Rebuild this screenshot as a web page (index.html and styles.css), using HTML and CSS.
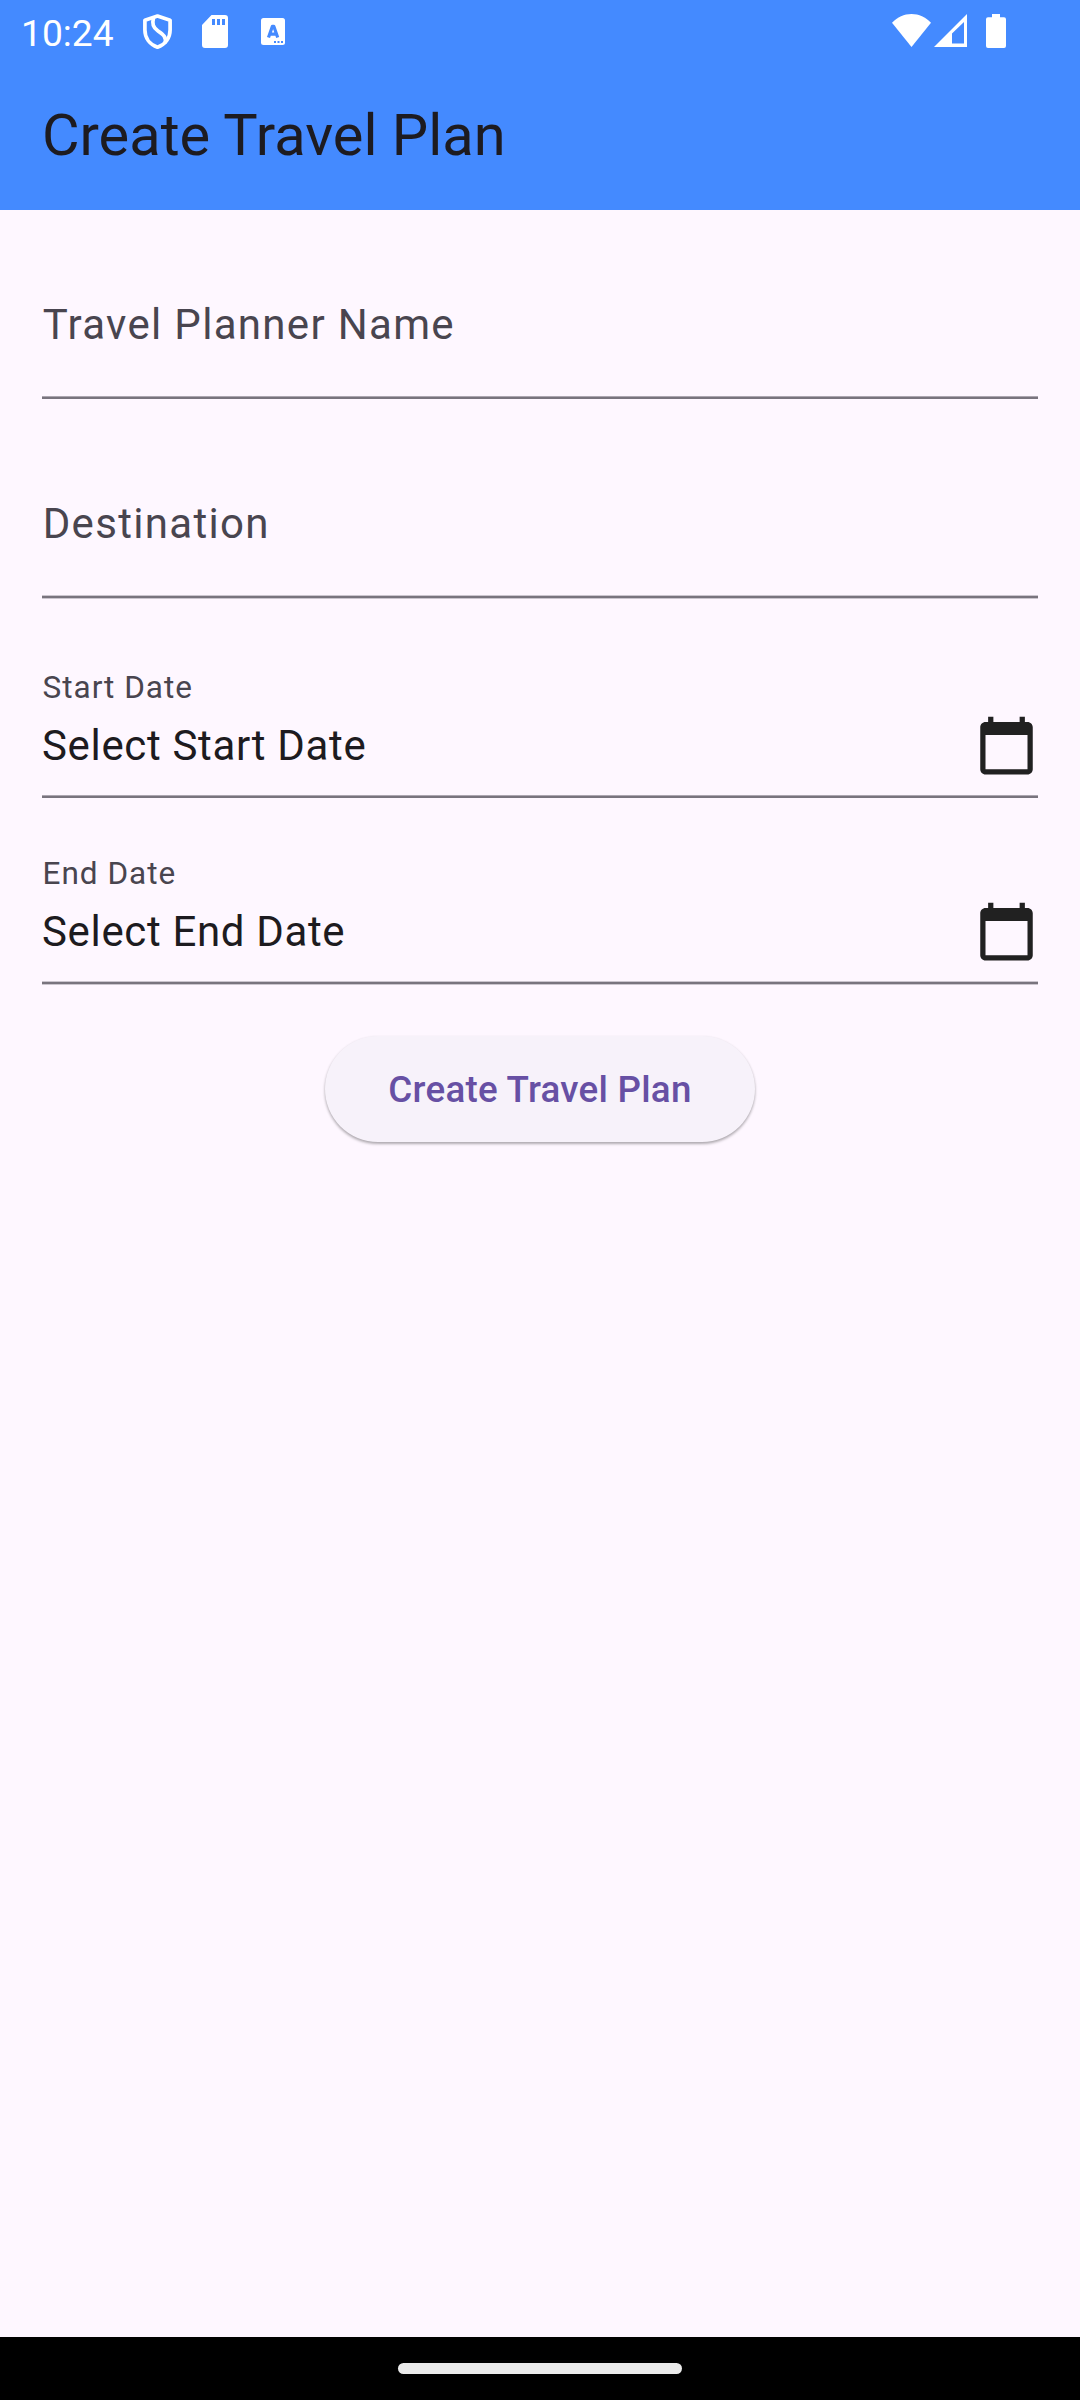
FILE: index.html
```html
<!DOCTYPE html>
<html lang="en">
<head>
<meta charset="utf-8">
<title>Create Travel Plan</title>
<link rel="stylesheet" href="styles.css">
</head>
<body>
<div class="screen">
  <header class="header">
    <div class="status">
      <span class="time">10:24</span>
      <svg class="shield" width="30" height="36" viewBox="0 0 30 36" fill="none" stroke="#fff" stroke-width="3.700" stroke-linejoin="round"><path d="M14.500 2 1.900 6.200V16c0 8.200 5 14.600 12.600 17.200C22.100 30.600 27.100 24.200 27.100 16V6.200Z"/><path d="M10.500 3.500C9 10 10 13.500 15 17c5.500 3.700 8.500 6 7 12"/></svg>
      <svg class="sd" width="26" height="33" viewBox="0 0 26 33"><path fill="#fff" fill-rule="evenodd" d="M9.500 0H23q3 0 3 3v27q0 3-3 3H3q-3 0-3-3V10ZM10 4v6h3V4Zm5 0v6h3V4Zm5 0v6h3V4Z"/></svg>
      <svg class="lang" width="24" height="27" viewBox="0 0 24 27"><rect width="24" height="27" rx="2.500" fill="#fff"/><path d="M7.500 19.500 11.400 8.300h1.400L16.700 19.500M9 16.200h6" fill="none" stroke="#448aff" stroke-width="3.200" stroke-linejoin="round"/><path d="M13 23h2v2h-2zm3.500 0h2v2h-2zm3.500 0h2v2h-2z" fill="#448aff"/></svg>
      <svg class="wifi" width="39" height="33" viewBox="0 0 39 33"><path fill="#fff" d="M0 8.800C5.500 3 12 0 19.500 0S33.500 3 39 8.800L19.500 33Z"/></svg>
      <svg class="signal" width="33" height="33" viewBox="0 0 33 33"><path fill="#fff" fill-rule="evenodd" d="M33 0v33H0ZM30 8 18 19.500V29.500h12Z"/></svg>
      <svg class="battery" width="20" height="34" viewBox="0 0 20 34"><path fill="#fff" d="M6 0h8v3.300h4q2 0 2 2V32q0 2-2 2H2q-2 0-2-2V5.300q0-2 2-2h4Z"/></svg>
    </div>
    <h1 class="title">Create Travel Plan</h1>
  </header>
  <main class="form">
    <div class="field name"><div class="label">Travel Planner Name</div><div class="rule"></div></div>
    <div class="field destination"><div class="label">Destination</div><div class="rule soft"></div></div>
    <div class="field date start">
      <div class="caption">Start Date</div>
      <div class="row"><span class="value">Select Start Date</span><svg class="calendar" viewBox="0 0 24 24"><path d="M20 3h-1V1h-2v2H7V1H5v2H4c-1.100 0-2 .9-2 2v16c0 1.100.9 2 2 2h16c1.100 0 2-.9 2-2V5c0-1.100-.9-2-2-2zm0 18H4V8h16v13z"/></svg></div>
      <div class="rule"></div>
    </div>
    <div class="field date end">
      <div class="caption">End Date</div>
      <div class="row"><span class="value">Select End Date</span><svg class="calendar" viewBox="0 0 24 24"><path d="M20 3h-1V1h-2v2H7V1H5v2H4c-1.100 0-2 .9-2 2v16c0 1.100.9 2 2 2h16c1.100 0 2-.9 2-2V5c0-1.100-.9-2-2-2zm0 18H4V8h16v13z"/></svg></div>
      <div class="rule soft"></div>
    </div>
    <button class="submit" type="button">Create Travel Plan</button>
  </main>
  <footer class="nav"><div class="handle"></div></footer>
</div>
</body>
</html>
```
FILE: styles.css
```css
* { box-sizing: border-box; }
body { margin: 0; font-family: Roboto, sans-serif; background: #fef7ff; }
svg { display: block; flex: none; }
.screen { width: 1080px; height: 2400px; display: flex; flex-direction: column; }

.header { height: 210px; background: #448aff; }
.status { height: 63px; padding-left: 21px; display: flex; align-items: flex-start; }
.time { width: 122px; padding-top: 12px; font-size: 37.2px; line-height: 43px; color: #fff; }
.shield { margin-top: 14px; }
.sd { margin: 15px 0 0 29px; }
.lang { margin: 18px 0 0 33px; }
.wifi { margin: 14px 0 0 auto; }
.signal { margin: 14px 0 0 3px; }
.battery { margin: 14px 74px 0 19px; }
.title { margin: 0; padding: 0 42px; font-size: 57.75px; font-weight: 400; line-height: 145px; color: #1d1b20; }

.form { flex: 1; padding: 0 42px; display: flex; flex-direction: column; }
.field { display: flex; flex-direction: column; }
.name { padding-top: 90px; }
.destination { padding-top: 100px; }
.start { padding-top: 70px; }
.end { padding-top: 57px; }
.label, .value { font-size: 42px; line-height: 50px; }
.label { padding-left: 0.7px; letter-spacing: 1.3125px; color: #49454f; margin-bottom: 46px; }
.value { letter-spacing: 0.656px; color: #1d1b20; }
.caption { padding-left: 0.6px; font-size: 31.5px; line-height: 38px; letter-spacing: 0.984px; color: #49454f; margin-bottom: 7px; }
.row { height: 63px; display: flex; align-items: center; justify-content: space-between; margin-bottom: 18px; }
.calendar { width: 63px; height: 63px; fill: #212121; }
.rule { height: 3px; background: #79747e; border-top: 1px solid #aca6b0; }
.rule.soft { height: 4px; border-top-color: #cbc5ce; border-bottom: 1px solid #cbc5ce; }

.submit {
  align-self: center;
  width: 430px;
  height: 106px;
  margin-top: 51px;
  padding: 2px 0 0;
  border: 0;
  border-radius: 53px;
  background: #f7f2fa;
  box-shadow: 0 2px 3px rgba(0, 0, 0, 0.28), 0 1px 3px rgba(0, 0, 0, 0.08);
  font: 500 36.75px/104px Roboto, sans-serif;
  letter-spacing: 0.2625px;
  color: #6750a4;
}

.nav { height: 63px; background: #000; display: flex; justify-content: center; padding-top: 26px; }
.handle { width: 284px; height: 11px; border-radius: 6px; background: #ebebeb; }
```
